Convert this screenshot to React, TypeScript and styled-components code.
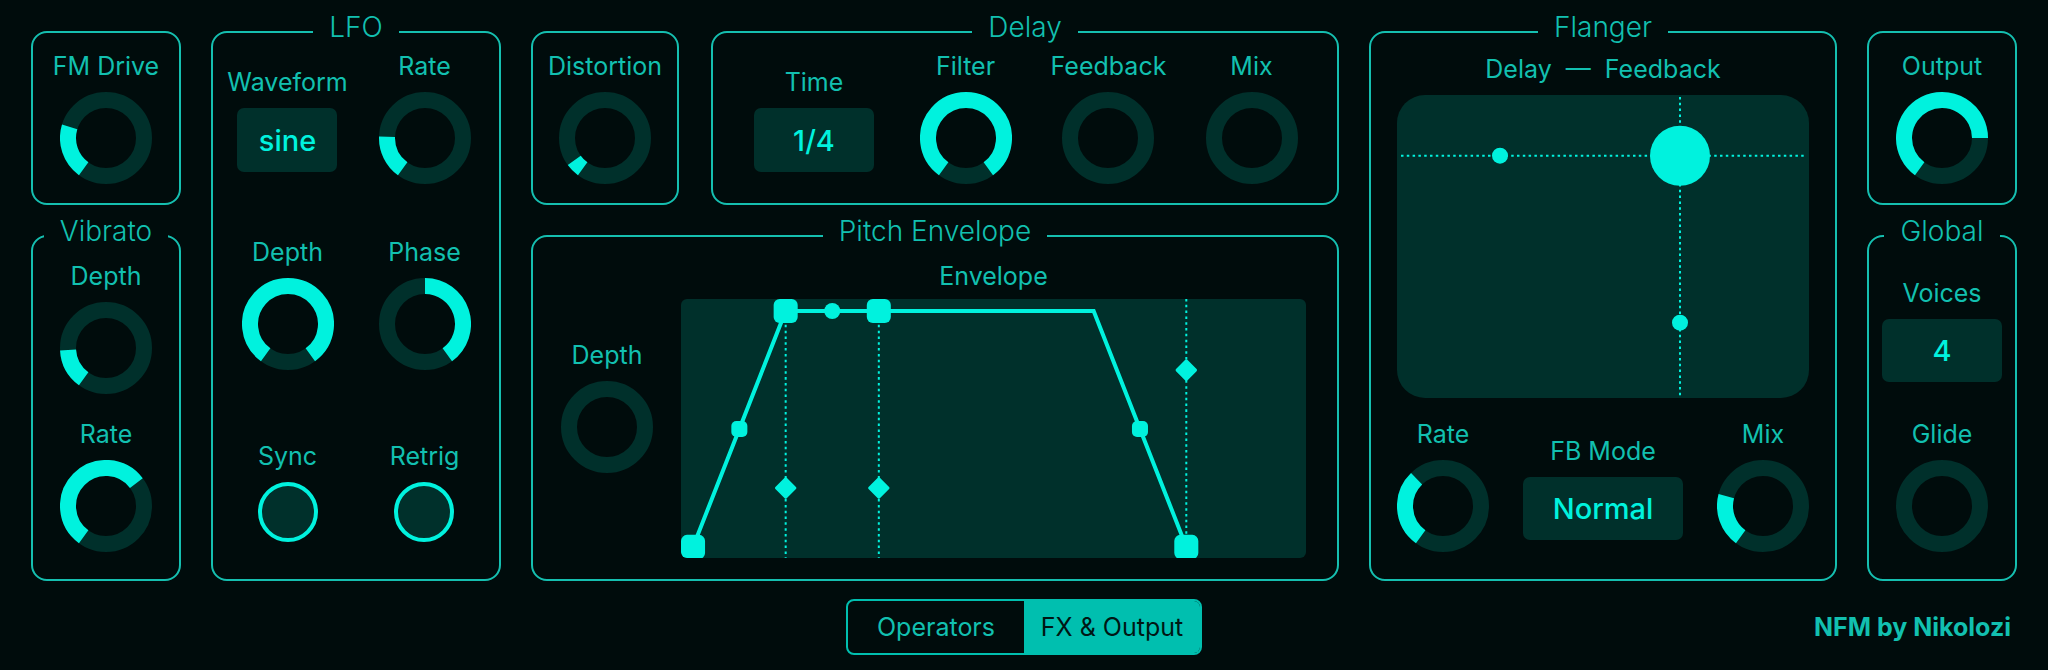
import React from 'react'
import styled, { createGlobalStyle } from 'styled-components'

const C = {
  bg: '#000c0c',
  line: '#15bfb0',
  text: '#12c0b0',
  bright: '#00f2de',
  well: '#00302b',
  tab: '#00bfaf',
}

const GlobalStyle = createGlobalStyle`
  html, body {
    margin: 0;
    padding: 0;
    background: ${C.bg};
  }
  body {
    font-family: Inter, "Noto Sans", "Liberation Sans", sans-serif;
  }
`

const Screen = styled.div`
  width: 2048px;
  height: 670px;
  box-sizing: border-box;
  padding: 31px 31px 0;
  display: flex;
  flex-direction: column;
  background: ${C.bg};
  color: ${C.text};
`

const Main = styled.div`
  display: grid;
  grid-template-columns: 150px 290px 808px 468px 150px;
  grid-template-rows: 174px 346px;
  gap: 30px;
`

const Panel = styled.div<{ $span?: boolean }>`
  box-sizing: border-box;
  border: 2px solid ${C.line};
  border-radius: 16px;
  display: flex;
  flex-direction: column;
  min-width: 0;
  grid-row: ${p => (p.$span ? 'span 2' : 'auto')};
`

const FxRow = styled.div`
  display: grid;
  grid-template-columns: 148px 1fr;
  gap: 32px;
`

// sits on the top border, takes no net height in the flow
const Title = styled.div`
  align-self: center;
  margin: -23px 0 -11px;
  padding: 0 16px;
  background: ${C.bg};
  font-size: 28px;
  font-weight: 300;
  line-height: 34px;
  color: ${C.text};
  position: relative;
`

const Label = styled.div`
  font-size: 25px;
  line-height: 30px;
  white-space: pre;
  color: ${C.text};
`

const Control = styled.div`
  display: flex;
  flex-direction: column;
  align-items: center;
  gap: 11px;
`

const ComboControl = styled(Control)`
  min-height: 133px;
  box-sizing: border-box;
  padding-top: 4px;
  justify-content: center;
`

const ValueBox = styled.div<{ $w: number; $h?: number }>`
  width: ${p => p.$w}px;
  height: ${p => p.$h ?? 64}px;
  border-radius: 7px;
  background: ${C.well};
  color: ${C.bright};
  display: flex;
  align-items: center;
  justify-content: center;
  font-size: 29px;
  font-weight: 500;
`

const Toggle = styled.div`
  width: 60px;
  height: 60px;
  box-sizing: border-box;
  border-radius: 50%;
  border: 4px solid ${C.bright};
  background: ${C.well};
`

const KnobSvg = styled.svg`
  width: 92px;
  height: 92px;
  display: block;
`

const KnobBody = styled.div`
  padding-top: 18px;
  display: flex;
  justify-content: center;
`

const LfoBody = styled.div`
  padding: 18px 6px 0;
  display: grid;
  grid-template-columns: 1fr 1fr;
  grid-template-rows: 186px 204px auto;
  justify-items: center;
  align-items: start;
`

const DelayBody = styled.div`
  padding: 18px 0 0 21px;
  display: grid;
  grid-template-columns: 160px repeat(3, 143px);
  justify-items: center;
  align-items: start;
`

const StackBody = styled.div`
  flex: 1;
  padding: 24px 0 27px;
  display: flex;
  flex-direction: column;
  align-items: center;
  justify-content: space-between;
`

const PitchBody = styled.div`
  flex: 1;
  display: flex;
  padding: 24px 31px 21px 0;
`

const DepthColumn = styled.div`
  width: 148px;
  display: flex;
  flex-direction: column;
  align-items: center;
  justify-content: center;
  padding-bottom: 6px;
`

const EnvColumn = styled.div`
  flex: 1;
  display: flex;
  flex-direction: column;
  align-items: center;
  gap: 8px;
`

const EnvGraph = styled.div`
  align-self: stretch;
  flex: 1;
  background: ${C.well};
  border-radius: 6px;
  overflow: hidden;
`

const FlangerBody = styled.div`
  flex: 1;
  display: flex;
  flex-direction: column;
  align-items: center;
  padding: 21px 26px 27px;
`

const XYPad = styled.div`
  align-self: stretch;
  flex: 1;
  margin: 11px 0 21px;
  background: ${C.well};
  border-radius: 28px;
  overflow: hidden;
`

const FlangerRow = styled.div`
  align-self: stretch;
  display: flex;
  justify-content: space-between;
  align-items: flex-start;
`

const Drawing = styled.svg`
  display: block;
  width: 100%;
  height: 100%;
`

const Footer = styled.div`
  margin-top: 18px;
  display: grid;
  grid-template-columns: 1fr auto 1fr;
  align-items: center;
`

const Tabs = styled.div`
  grid-column: 2;
  width: 356px;
  height: 56px;
  box-sizing: border-box;
  border: 2px solid ${C.tab};
  border-radius: 8px;
  overflow: hidden;
  display: flex;
`

const Tab = styled.div<{ $active?: boolean }>`
  flex: 1;
  display: flex;
  align-items: center;
  justify-content: center;
  font-size: 25px;
  background: ${p => (p.$active ? C.tab : 'transparent')};
  color: ${p => (p.$active ? '#001714' : C.text)};
`

const Credit = styled.div`
  justify-self: end;
  margin-right: 6px;
  font-size: 25px;
  font-weight: 700;
  color: ${C.text};
`

const R = 38

const polar = (a: number) => {
  const t = (a * Math.PI) / 180
  return [46 + R * Math.sin(t), 46 - R * Math.cos(t)]
}

const arc = (a0: number, a1: number) => {
  const [x0, y0] = polar(a0)
  const [x1, y1] = polar(a1)
  const large = a1 - a0 > 180 ? 1 : 0
  return `M${x0} ${y0} A${R} ${R} 0 ${large} 1 ${x1} ${y1}`
}

// angles in degrees clockwise from 12 o'clock, full range -144..144
const Knob = ({ from = -144, to }: { from?: number; to?: number }) => (
  <KnobSvg viewBox="0 0 92 92">
    <circle cx={46} cy={46} r={R} fill="none" stroke={C.well} strokeWidth={16} />
    {to !== undefined && (
      <path d={arc(from, to)} fill="none" stroke={C.bright} strokeWidth={16} />
    )}
  </KnobSvg>
)

const KnobControl = ({ label, from, to }: { label: string; from?: number; to?: number }) => (
  <Control>
    <Label>{label}</Label>
    <Knob from={from} to={to} />
  </Control>
)

const Combo = ({ label, value, w, h }: { label: string; value: string; w: number; h?: number }) => (
  <ComboControl>
    <Label>{label}</Label>
    <ValueBox $w={w} $h={h}>{value}</ValueBox>
  </ComboControl>
)

const ToggleControl = ({ label }: { label: string }) => (
  <Control>
    <Label>{label}</Label>
    <Toggle />
  </Control>
)

const dots = { stroke: C.bright, strokeWidth: 2, strokeDasharray: '2.5 3.3' }

const Diamond = ({ x, y }: { x: number; y: number }) => (
  <rect x={x - 8} y={y - 8} width={16} height={16} rx={1.5} fill={C.bright} transform={`rotate(45 ${x} ${y})`} />
)

const Square = ({ x, y, s, r }: { x: number; y: number; s: number; r: number }) => (
  <rect x={x - s / 2} y={y - s / 2} width={s} height={s} rx={r} fill={C.bright} />
)

const Envelope = () => (
  <Drawing viewBox="0 0 624 259">
    <line x1={104.5} y1={20} x2={104.5} y2={259} {...dots} />
    <line x1={197.5} y1={20} x2={197.5} y2={259} {...dots} />
    <line x1={504.5} y1={0} x2={504.5} y2={240} {...dots} />
    <polyline points="12,247.5 104.5,12 412,12 504.5,247.5" fill="none" stroke={C.bright} strokeWidth={4} strokeLinejoin="miter" />
    <Square x={12} y={247.5} s={24} r={6} />
    <Square x={104.5} y={12} s={24} r={6} />
    <Square x={197.5} y={12} s={24} r={6} />
    <Square x={504.5} y={247.5} s={24} r={6} />
    <circle cx={151} cy={12} r={8} fill={C.bright} />
    <Square x={58.25} y={129.75} s={16} r={5} />
    <Square x={458.25} y={129.75} s={16} r={5} />
    <Diamond x={104.5} y={188.7} />
    <Diamond x={197.5} y={188.7} />
    <Diamond x={504.5} y={71} />
  </Drawing>
)

const PadDrawing = () => (
  <Drawing viewBox="0 0 412 303">
    <line x1={4} y1={60.7} x2={410} y2={60.7} {...dots} />
    <line x1={283} y1={2} x2={283} y2={303} {...dots} />
    <circle cx={283} cy={60.7} r={30} fill={C.bright} />
    <circle cx={103} cy={60.7} r={8} fill={C.bright} />
    <circle cx={283} cy={227.7} r={8} fill={C.bright} />
  </Drawing>
)

export default function App() {
  return (
    <>
      <GlobalStyle />
      <Screen>
        <Main>
          <Panel>
            <KnobBody>
              <KnobControl label="FM Drive" to={-73} />
            </KnobBody>
          </Panel>

          <Panel $span>
            <Title>LFO</Title>
            <LfoBody>
              <Combo label="Waveform" value="sine" w={100} />
              <KnobControl label="Rate" to={-88} />
              <KnobControl label="Depth" to={144} />
              <KnobControl label="Phase" from={0} to={144} />
              <ToggleControl label="Sync" />
              <ToggleControl label="Retrig" />
            </LfoBody>
          </Panel>

          <FxRow>
            <Panel>
              <KnobBody>
                <KnobControl label="Distortion" to={-126} />
              </KnobBody>
            </Panel>
            <Panel>
              <Title>Delay</Title>
              <DelayBody>
                <Combo label="Time" value="1/4" w={120} />
                <KnobControl label="Filter" to={144} />
                <KnobControl label="Feedback" />
                <KnobControl label="Mix" />
              </DelayBody>
            </Panel>
          </FxRow>

          <Panel $span>
            <Title>Flanger</Title>
            <FlangerBody>
              <Label>{'Delay  —  Feedback'}</Label>
              <XYPad>
                <PadDrawing />
              </XYPad>
              <FlangerRow>
                <KnobControl label="Rate" to={-44} />
                <Combo label="FB Mode" value="Normal" w={160} h={63} />
                <KnobControl label="Mix" to={-75} />
              </FlangerRow>
            </FlangerBody>
          </Panel>

          <Panel>
            <KnobBody>
              <KnobControl label="Output" to={90} />
            </KnobBody>
          </Panel>

          <Panel>
            <Title>Vibrato</Title>
            <StackBody>
              <KnobControl label="Depth" to={-93} />
              <KnobControl label="Rate" to={53} />
            </StackBody>
          </Panel>

          <Panel>
            <Title>Pitch Envelope</Title>
            <PitchBody>
              <DepthColumn>
                <KnobControl label="Depth" />
              </DepthColumn>
              <EnvColumn>
                <Label>Envelope</Label>
                <EnvGraph>
                  <Envelope />
                </EnvGraph>
              </EnvColumn>
            </PitchBody>
          </Panel>

          <Panel>
            <Title>Global</Title>
            <StackBody>
              <Combo label="Voices" value="4" w={120} h={63} />
              <KnobControl label="Glide" />
            </StackBody>
          </Panel>
        </Main>

        <Footer>
          <Tabs>
            <Tab>Operators</Tab>
            <Tab $active>FX &amp; Output</Tab>
          </Tabs>
          <Credit>NFM by Nikolozi</Credit>
        </Footer>
      </Screen>
    </>
  )
}
